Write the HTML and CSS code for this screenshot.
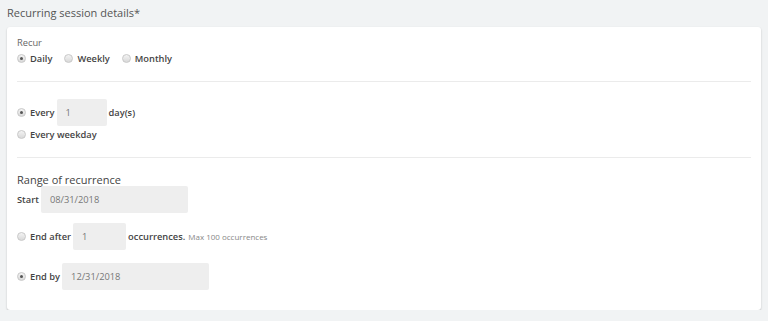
FILE: index.html
```html
<!DOCTYPE html>
<html lang="en">
<head>
  <meta charset="UTF-8">
  <title>Recurring session details</title>
  <link rel="stylesheet" href="styles.css">
</head>
<body>
  <h3 class="section-title">Recurring session details*</h3>
  <div class="card">
    <div class="field-label">Recur</div>
    <div class="radio-row">
      <label class="radio"><span class="dot checked"></span>Daily</label>
      <label class="radio"><span class="dot"></span>Weekly</label>
      <label class="radio"><span class="dot"></span>Monthly</label>
    </div>
    <hr class="divider first">

    <div class="line every">
      <label class="radio"><span class="dot checked"></span>Every</label>
      <div class="box small">1</div>
      <span class="strong">day(s)</span>
    </div>
    <div class="line weekday">
      <label class="radio"><span class="dot"></span>Every weekday</label>
    </div>
    <hr class="divider second">

    <div class="range-title">Range of recurrence</div>
    <div class="line start">
      <span class="strong">Start</span>
      <div class="box wide">08/31/2018</div>
    </div>
    <div class="line end-after">
      <label class="radio"><span class="dot"></span>End after</label>
      <div class="box small">1</div>
      <span class="strong">occurrences.</span>
      <span class="hint">Max 100 occurrences</span>
    </div>
    <div class="line end-by">
      <label class="radio"><span class="dot checked"></span>End by</label>
      <div class="box wide">12/31/2018</div>
    </div>
  </div>
</body>
</html>
```

FILE: styles.css
```css
body { margin: 0; background: #f1f3f4; font-family: "Open Sans", "Liberation Sans", sans-serif; color: #555; }
.section-title { margin: 0; padding: 4px 7px 0 7px; height: 23px; font-size: 11px; font-weight: 400; line-height: 18px; color: #555; }
.card { margin: 0 7px; background: #fff; border-radius: 3px; box-shadow: 0 1px 2px rgba(0,0,0,0.22); padding: 9px 10px 20px 10px; }
.field-label { font-size: 9.3px; line-height: 14px; color: #666; }
.radio-row { display: flex; gap: 12px; height: 16px; align-items: center; }
.radio { display: inline-flex; align-items: center; font-size: 9.3px; font-weight: 600; color: #444; white-space: nowrap; }
.dot { width: 7px; height: 7px; border-radius: 50%; border: 1px solid #c8c8c8; background: linear-gradient(#f3f3f3, #d9d9d9); margin-right: 4px; position: relative; }
.dot.checked::after { content: ""; position: absolute; left: 2px; top: 2px; width: 3px; height: 3px; border-radius: 50%; background: #555; }
.divider { border: 0; border-top: 1px solid #ebebeb; margin: 0; }
.divider.first { margin-top: 15px; margin-bottom: 17px; }
.divider.second { margin-top: 15px; margin-bottom: 16px; }
.line { display: flex; align-items: center; gap: 2px; }
.strong { font-size: 9.3px; font-weight: 600; color: #444; }
.box { background: #eeeeee; border-radius: 2px; font-size: 9.3px; color: #777; height: 27px; line-height: 27px; padding: 0 9px; box-sizing: border-box; }
.box.small { width: 50px; }
.box.wide { width: 147px; }
.weekday { height: 16px; }
.range-title { font-size: 11px; line-height: 12px; color: #444; }
.end-after { margin-top: 10px; }
.end-after .box.small { width: 53px; }
.end-by { margin-top: 13px; }
.hint { font-size: 8px; color: #888; font-weight: 400; margin-left: 1px; }
```
